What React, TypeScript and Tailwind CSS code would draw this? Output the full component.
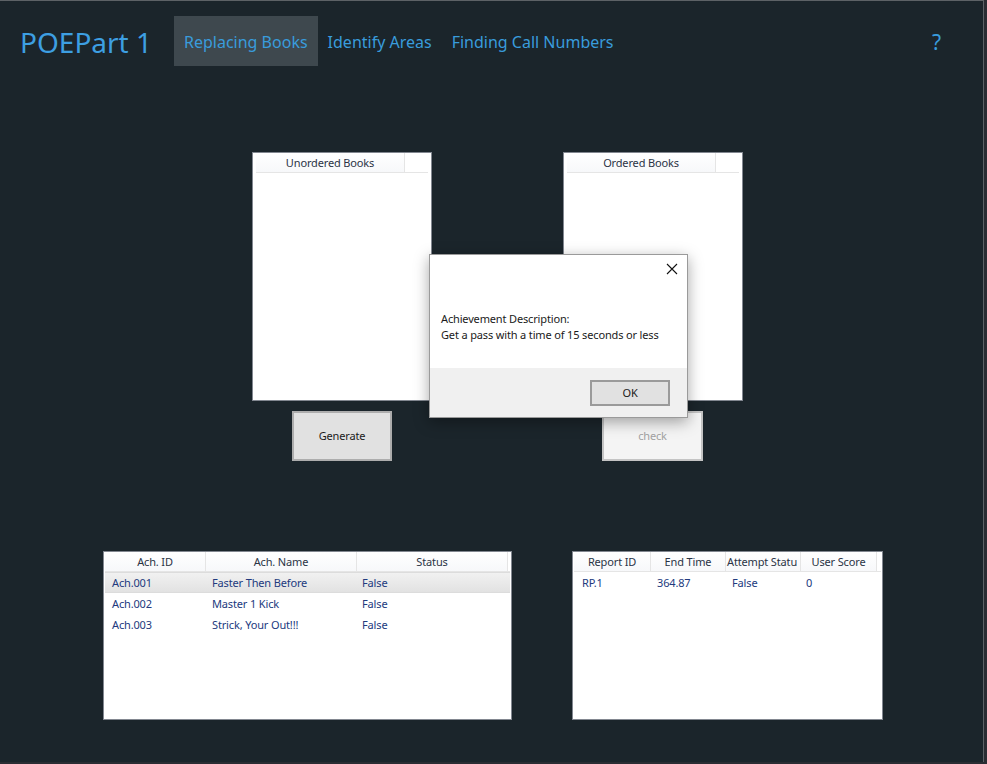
import React from "react";

const F = "font-['Noto_Sans',sans-serif]";
const SM = "text-[11px] tracking-[-0.15px]";

function HeaderCell({ w, label, last, left }: { w: number; label: string; last?: boolean; left?: boolean }) {
  return (
    <div
      className={`h-[20px] pt-[1px] flex items-center ${left ? "justify-start pl-[1px]" : "justify-center"} ${SM} text-[#2b3445] border-b border-[#e5e5e5] bg-gradient-to-b from-white to-[#f7f8fa] ${last ? "" : "border-r"} shrink-0 overflow-hidden whitespace-nowrap`}
      style={{ width: w }}
    >
      {label}
    </div>
  );
}

function BookList({ title }: { title: string }) {
  return (
    <div className="w-[180px] h-[249px] bg-white border border-[#828790] px-[3px]">
      <div className="flex">
        <HeaderCell w={149} label={title} />
        <div className="flex-1 h-[20px] border-b border-[#e5e5e5]" />
      </div>
    </div>
  );
}

export default function App() {
  const achRows = [
    ["Ach.001", "Faster Then Before", "False"],
    ["Ach.002", "Master 1 Kick", "False"],
    ["Ach.003", "Strick, Your Out!!!", "False"],
  ];
  return (
    <div className={`w-[987px] h-[764px] bg-[#2a2d33] ${F}`}>
      <div className="relative w-[984px] h-[762px] bg-[#1b252b] border-t border-r border-[#5d6266]">
        {/* nav */}
        <div className="flex items-center h-[65px] pt-[15px] pl-[20px] pr-[42px]">
          <div className="w-[154px] h-[50px] flex items-center pt-[2px] text-[28px] text-[#3d9fe2]">POEPart 1</div>
          <div className="h-[50px] px-[10px] pt-[1px] flex items-center bg-[#3e484e] text-[16px] text-[#399cdc]">Replacing Books</div>
          <div className="h-[50px] px-[10px] pt-[1px] flex items-center text-[16px] text-[#399cdc]">Identify Areas</div>
          <div className="h-[50px] px-[10px] pt-[1px] flex items-center text-[16px] text-[#399cdc]">Finding Call Numbers</div>
          <div className="flex-1" />
          <div className="h-[50px] pt-[3px] flex items-center text-[21px] text-[#399cdc]">?</div>
        </div>

        {/* book lists */}
        <div className="flex pl-[252px] gap-[131px] mt-[86px]">
          <BookList title="Unordered Books" />
          <BookList title="Ordered Books" />
        </div>

        {/* buttons */}
        <div className="flex pl-[292px] gap-[210px] mt-[10px]">
          <div className={`w-[100px] h-[50px] bg-[#e1e1e1] border-2 border-[#adadad] flex items-center justify-center ${SM} text-[#1a1a1a]`}>
            Generate
          </div>
          <div className={`w-[101px] h-[50px] bg-[#f4f4f4] border-2 border-[#c4c4c4] flex items-center justify-center ${SM} text-[#a2a2a2]`}>
            check
          </div>
        </div>

        {/* tables */}
        <div className="flex pl-[103px] gap-[60px] mt-[90px]">
          <div className="w-[409px] h-[169px] bg-white border border-[#828790] px-[1px]">
            <div className="flex">
              <HeaderCell w={101} label="Ach. ID" />
              <HeaderCell w={151} label="Ach. Name" />
              <HeaderCell w={151} label="Status" />
              <div className="flex-1 h-[20px] border-b border-[#e5e5e5]" />
            </div>
            {achRows.map((r, i) => (
              <div
                key={i}
                className={`flex h-[21px] pt-[1px] items-center ${SM} text-[#223a7e] ${i === 0 ? "bg-gradient-to-b from-[#f1f1f1] to-[#e2e2e2] border-y border-[#dcdcdc]" : ""}`}
              >
                <div className="w-[101px] pl-[7px]">{r[0]}</div>
                <div className="w-[151px] pl-[6px]">{r[1]}</div>
                <div className="w-[151px] pl-[5px]">{r[2]}</div>
              </div>
            ))}
          </div>
          <div className="w-[311px] h-[169px] bg-white border border-[#828790] px-[1px]">
            <div className="flex">
              <HeaderCell w={77} label="Report ID" />
              <HeaderCell w={75} label="End Time" />
              <HeaderCell w={75} label="Attempt Statu" left />
              <HeaderCell w={76} label="User Score" />
              <div className="flex-1 h-[20px] border-b border-[#e5e5e5]" />
            </div>
            <div className={`flex h-[21px] pt-[1px] items-center ${SM} text-[#223a7e]`}>
              <div className="w-[77px] pl-[8px]">RP.1</div>
              <div className="w-[75px] pl-[6px]">364.87</div>
              <div className="w-[75px] pl-[6px]">False</div>
              <div className="w-[76px] pl-[5px]">0</div>
            </div>
          </div>
        </div>

        {/* dialog */}
        <div className="absolute left-[429px] top-[253px] w-[259px] h-[164px] border border-[#9a9a9a] shadow-[0_4px_14px_rgba(0,0,0,0.35)] flex flex-col">
          <div className="bg-white h-[113px] relative">
            <svg className="absolute right-[9px] top-[8px]" width="12" height="12" viewBox="0 0 12 12">
              <path d="M1 1L11 11M11 1L1 11" stroke="#111" strokeWidth="1.1" />
            </svg>
            <div className={`pt-[56px] pl-[11px] ${SM} leading-[16px] text-[#1a1a1a]`}>
              <div>Achievement Description:</div>
              <div>Get a pass with a time of 15 seconds or less</div>
            </div>
          </div>
          <div className="flex-1 bg-[#f0f0f0] flex items-start justify-end pr-[17px] pt-[12px]">
            <div className={`w-[80px] h-[26px] bg-[#e1e1e1] border-2 border-[#9a9a9a] flex items-center justify-center ${SM} text-[#1a1a1a]`}>
              OK
            </div>
          </div>
        </div>
      </div>
    </div>
  );
}
